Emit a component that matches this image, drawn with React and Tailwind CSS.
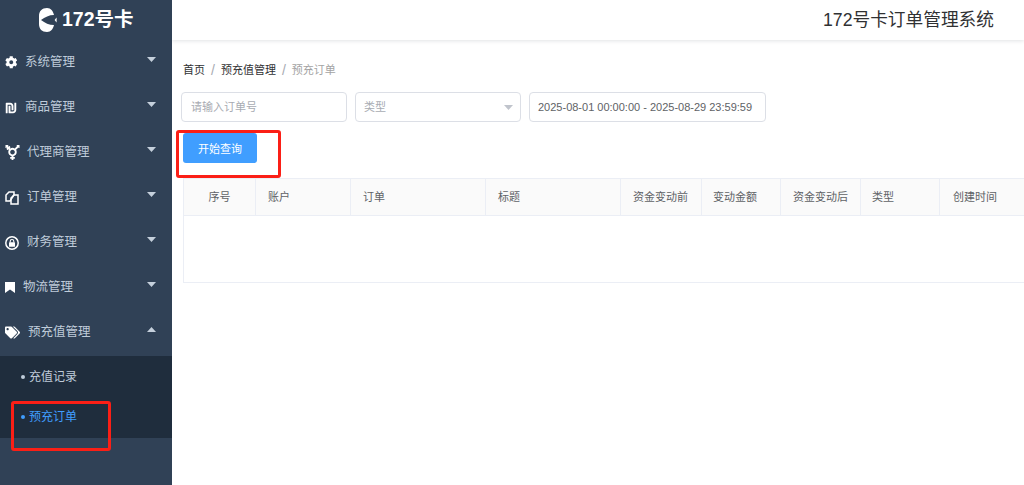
import React from 'react';
import { FaCog, FaShekelSign, FaTransgenderAlt, FaTags } from 'react-icons/fa';

const FONT = '"Liberation Sans", "Noto Sans CJK SC", sans-serif';

const Caret = ({ up }) => (
    <svg width="9" height="5" viewBox="0 0 9 5" className="fill-[#c5d0dc]">
        <path d={up ? 'M4.5 0 L9 5 L0 5 Z' : 'M0 0 L9 0 L4.5 5 Z'} />
    </svg>
);

const Logo = () => (
    <svg width="18" height="24" viewBox="0 0 18 24" className="fill-white">
        <path d="M8 0 C3 0 0 3 0 8 L0 16 C0 21 3 24 8 24 C12 24 14 21 15 17 C10 17 6 15 2 12 C6 9 10 7 15 7 C14 3 12 0 8 0 Z" />
        <path d="M17.6 9.5 L17.6 14.5 L15.6 12 Z" />
    </svg>
);

const FilesIcon = () => (
    <svg width="14" height="14" viewBox="0 0 14 14" fill="none" className="stroke-white" strokeWidth="1.5">
        <path d="M1 10 L1 4 L4 1 L9 1 L9 4 L5 10 Z" />
        <path d="M6 13 L6 7 L9 4 L13 4 L13 13 Z" />
    </svg>
);

const LockCircle = () => (
    <svg width="14" height="14" viewBox="0 0 14 14">
        <circle cx="7" cy="7" r="6.2" fill="#304156" stroke="#fff" strokeWidth="1.5" />
        <path d="M5.2 6.4 L5.2 5.2 C5.2 3 8.8 3 8.8 5.2 L8.8 6.4" fill="none" stroke="#fff" strokeWidth="1.1" />
        <rect x="4" y="6.2" width="6" height="4.6" rx="0.6" fill="#fff" />
    </svg>
);

const BookmarkIcon = () => (
    <svg width="10" height="11" viewBox="0 0 10 11" className="fill-white">
        <path d="M0 0 L10 0 L10 11 L5 7.5 L0 11 Z" />
    </svg>
);

const menus = [
    { name: '系统管理', icon: <FaCog className="text-[12.5px]" />, gap: 'w-[25px]' },
    { name: '商品管理', icon: <FaShekelSign className="text-[12px]" />, gap: 'w-[25px]' },
    { name: '代理商管理', icon: <FaTransgenderAlt className="text-[15px]" />, gap: 'w-[27px]' },
    { name: '订单管理', icon: <FilesIcon />, gap: 'w-[27px]' },
    { name: '财务管理', icon: <LockCircle />, gap: 'w-[27px]' },
    { name: '物流管理', icon: <BookmarkIcon />, gap: 'w-[23px]' },
    { name: '预充值管理', icon: <FaTags className="text-[15px]" />, gap: 'w-[28px]', open: true },
];

const columns = [
    { name: '序号', width: 'w-[72px]', pad: 'justify-center' },
    { name: '账户', width: 'w-[95px]', pad: 'pl-[12px]' },
    { name: '订单', width: 'w-[135px]', pad: 'pl-[12px]' },
    { name: '标题', width: 'w-[135px]', pad: 'pl-[12px]' },
    { name: '资金变动前', width: 'w-[81px]', pad: 'pl-[12px]' },
    { name: '变动金额', width: 'w-[79px]', pad: 'pl-[11px]' },
    { name: '资金变动后', width: 'w-[80px]', pad: 'pl-[12px]' },
    { name: '类型', width: 'w-[79px]', pad: 'pl-[11px]' },
    { name: '创建时间', width: 'w-[160px]', pad: 'pl-[13px]' },
];

const Sidebar = () => (
    <aside className="h-full w-[172px] shrink-0 bg-[#304156]">
        <div className="flex h-[40px] items-center pl-[39px] gap-[5px]">
            <Logo />
            <span className="text-[19.5px] leading-none font-bold text-white">172号卡</span>
        </div>
        {menus.map((m) => (
            <div key={m.name} className="flex h-[45px] items-center pl-[5px] pr-[16px] text-[12.5px] text-[#bfcbd9]">
                <span className={`${m.gap} flex shrink-0 items-center -mr-[5px] text-white`}>{m.icon}</span>
                <span className="flex-1">{m.name}</span>
                <span className="-mt-[6px]"><Caret up={m.open} /></span>
            </div>
        ))}
        <div className="mt-[1px] h-[82px] bg-[#1f2d3d] pl-[21px] pt-[1px] text-[12px]">
            <div className="flex h-[40px] items-center gap-[4px] text-[#bfcbd9]">
                <span className="h-[4px] w-[4px] rounded-full bg-[#bfcbd9]"></span>
                充值记录
            </div>
            <div className="flex h-[40px] items-center gap-[4px] text-[#409eff]">
                <span className="h-[4px] w-[4px] rounded-full bg-[#409eff]"></span>
                预充订单
            </div>
        </div>
    </aside>
);

const App = () => {
    return (
        <div className="relative flex h-[485px] w-[1024px] overflow-hidden bg-white" style={{ fontFamily: FONT }}>
            <Sidebar />
            <main className="min-w-0 flex-1 overflow-hidden">
                <header className="flex h-[40px] items-center justify-end pr-[30px] text-[17.7px] text-[#303133] shadow-[0_1px_4px_rgba(0,21,41,0.12)]">
                    172号卡订单管理系统
                </header>
                <div className="pl-[11px]">
                    {/* Breadcrumb */}
                    <div className="mt-[22px] flex h-[16px] items-center text-[11px] text-[#303133]">
                        <span>首页</span>
                        <span className="mx-[6px] text-[14px] text-[#a8abb2]">/</span>
                        <span>预充值管理</span>
                        <span className="ml-[6px] mr-[6px] text-[14px] text-[#a8abb2]">/</span>
                        <span className="text-[#a3a3a3]">预充订单</span>
                    </div>

                    {/* Filters */}
                    <div className="mt-[14px] -ml-[2px] flex gap-[8px] text-[11px]">
                        <input
                            placeholder="请输入订单号"
                            className="h-[30px] w-[166px] rounded-[4px] border border-[#dcdfe6] px-[9px] outline-none placeholder:text-[#a8abb2]"
                        />
                        <div className="flex h-[30px] w-[166px] items-center justify-between rounded-[4px] border border-[#dcdfe6] pl-[8px] pr-[7px] text-[#a8abb2]">
                            <span>类型</span>
                            <svg width="9" height="5" viewBox="0 0 9 5" className="fill-[#c0c4cc]"><path d="M0 0 L9 0 L4.5 5 Z" /></svg>
                        </div>
                        <input
                            readOnly
                            value="2025-08-01 00:00:00 - 2025-08-29 23:59:59"
                            className="h-[30px] w-[237px] rounded-[4px] border border-[#dcdfe6] px-[8px] text-[11px] text-[#606266] outline-none"
                        />
                    </div>

                    <button className="mt-[11px] block h-[30px] w-[74px] rounded-[3px] bg-[#409eff] pt-[3px] text-[11px] text-white">开始查询</button>

                    {/* Table */}
                    <div className="mt-[15px] w-[1000px] border-b border-l border-t border-[#ebeef5]">
                        <div className="flex h-[37px] border-b border-[#ebeef5] bg-[#fafafa] text-[11px] text-[#606266]">
                            {columns.map((c) => (
                                <div
                                    key={c.name}
                                    className={`${c.width} ${c.pad} flex shrink-0 items-center border-r border-[#ebeef5]`}
                                >
                                    {c.name}
                                </div>
                            ))}
                        </div>
                        <div className="h-[66px]"></div>
                    </div>
                </div>
            </main>

            {/* Red annotation boxes drawn over the page */}
            <div className="absolute left-[176px] top-[130px] h-[48px] w-[105px] rounded-[3px] border-[3px] border-[#fb1f16]"></div>
            <div className="absolute left-[11px] top-[401px] h-[50px] w-[100px] rounded-[3px] border-[3px] border-[#fb1f16]"></div>
        </div>
    );
};

export default App;
